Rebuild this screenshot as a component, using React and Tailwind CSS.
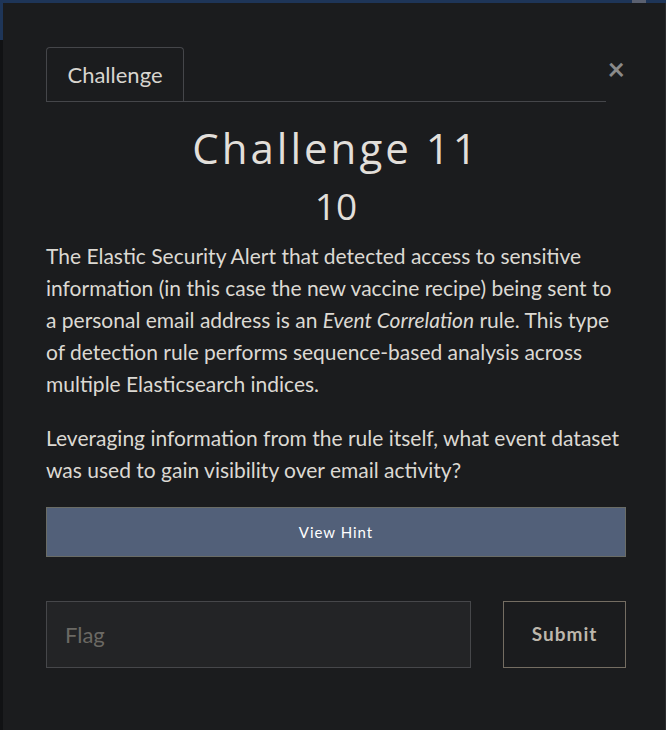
import React, { useState } from "react";

const body = { fontFamily: "Lato, 'Open Sans', sans-serif" };
const heading = { fontFamily: "'Open Sans', Lato, sans-serif" };

export default function App() {
  const [flag, setFlag] = useState("");

  return (
    <div className="w-[666px] h-[730px] bg-[#111214] relative overflow-hidden" style={body}>
      {/* backdrop page strip */}
      <div className="absolute top-0 left-0 w-full h-[40px] bg-[#1e3558]" />
      <div className="absolute top-0 left-[632px] w-[14px] h-[3px] bg-[#5a6070]" />

      <div className="absolute top-[3px] left-[3px] right-0 bottom-0 bg-[#1b1c1e] border-r border-[#2a2b2d]">
        <div className="pl-[43px] pr-[39px] pt-[44px]">
          {/* Header / tabs */}
          <div className="flex items-start">
            <div className="w-[560px] border-b border-[#45464a] flex">
              <div className="h-[54px] w-[138px] border border-b-0 border-[#45464a] rounded-t-[4px] flex items-center justify-center text-[22px] text-[#d8d5cf]">
                Challenge
              </div>
            </div>
            <button className="ml-auto mt-[6px] mr-[1px] text-[#8a8a8a] text-[30px] leading-none font-bold cursor-pointer">
              ×
            </button>
          </div>

          {/* Title */}
          <div className="text-center text-[#e2dfda] mt-[22px]">
            <h2 className="text-[42px] leading-[48px] tracking-[3px]" style={heading}>
              Challenge 11
            </h2>
            <h3 className="text-[37px] leading-[42px] mt-[13px]" style={heading}>
              10
            </h3>
          </div>

          {/* Description */}
          <div className="text-[21px] leading-[32px] text-[#dcd9d3] mt-[13px] pr-[3px]">
            <p>
              The Elastic Security Alert that detected access to sensitive information (in this case the new vaccine recipe) being sent to a personal email address is an <em>Event Correlation</em> rule. This type of detection rule performs sequence-based analysis across multiple Elasticsearch indices.
            </p>
            <p className="mt-[22px]">
              Leveraging information from the rule itself, what event dataset was used to gain visibility over email activity?
            </p>
          </div>

          {/* Hint */}
          <button className="mt-[21px] w-full h-[50px] bg-[#526079] border border-[#6a6c66] text-white text-[15px] tracking-[1px] cursor-pointer">
            View Hint
          </button>

          {/* Flag form */}
          <div className="mt-[44px] flex gap-[32px]">
            <input
              value={flag}
              onChange={(e) => setFlag(e.target.value)}
              placeholder="Flag"
              className="w-[425px] h-[67px] bg-[#232426] border border-[#46474a] px-[18px] text-[22px] text-[#dcd9d3] placeholder-[#6b6964] outline-none"
            />
            <button className="w-[123px] h-[67px] border border-[#746d62] text-[#bdb7ac] text-[19px] font-bold tracking-[1px] cursor-pointer">
              Submit
            </button>
          </div>
        </div>
      </div>
    </div>
  );
}
